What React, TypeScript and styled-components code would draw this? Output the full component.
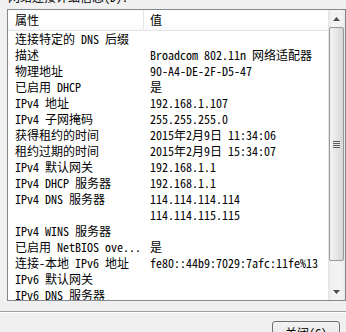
import styled, { createGlobalStyle } from 'styled-components';

const GlobalStyle = createGlobalStyle`
    html, body {
        margin: 0;
        padding: 0;
        background: #f0f0f0;
    }
    body {
        font-family: "Noto Sans Mono CJK SC", "Noto Sans CJK SC", "Liberation Mono", monospace;
        font-size: 12px;
        color: #000;
    }
`;

const rows: [string, string][] = [
    ['连接特定的 DNS 后缀', ''],
    ['描述', 'Broadcom 802.11n 网络适配器'],
    ['物理地址', '90-A4-DE-2F-D5-47'],
    ['已启用 DHCP', '是'],
    ['IPv4 地址', '192.168.1.107'],
    ['IPv4 子网掩码', '255.255.255.0'],
    ['获得租约的时间', '2015年2月9日 11:34:06'],
    ['租约过期的时间', '2015年2月9日 15:34:07'],
    ['IPv4 默认网关', '192.168.1.1'],
    ['IPv4 DHCP 服务器', '192.168.1.1'],
    ['IPv4 DNS 服务器', '114.114.114.114'],
    ['', '114.114.115.115'],
    ['IPv4 WINS 服务器', ''],
    ['已启用 NetBIOS ove...', '是'],
    ['连接-本地 IPv6 地址', 'fe80::44b9:7029:7afc:11fe%13'],
    ['IPv6 默认网关', ''],
    ['IPv6 DNS 服务器', ''],
];

export default function App() {
    return (
        <>
            <GlobalStyle />
            <Dialog>
                <Caption>网络连接详细信息(D):</Caption>
                <ListBox>
                    <ListContent>
                        <Header>
                            <HeaderCell>属性</HeaderCell>
                            <HeaderCell>值</HeaderCell>
                        </Header>
                        {rows.map(([k, v], i) => (
                            <Row key={i}>
                                <Cell>{k}</Cell>
                                <Cell>{v}</Cell>
                            </Row>
                        ))}
                    </ListContent>
                    <ScrollBar>
                        <Arrow>
                            <svg width="7" height="4" viewBox="0 0 7 4">
                                <path d="M0 4 L3.5 0 L7 4 Z" fill="#4d4d4d" />
                            </svg>
                        </Arrow>
                        <Track>
                            <Thumb>
                                <Grip />
                            </Thumb>
                        </Track>
                        <Arrow>
                            <svg width="7" height="4" viewBox="0 0 7 4">
                                <path d="M0 0 L7 0 L3.5 4 Z" fill="#4d4d4d" />
                            </svg>
                        </Arrow>
                    </ScrollBar>
                </ListBox>
                <Separator />
                <Footer>
                    <Button>关闭(C)</Button>
                </Footer>
            </Dialog>
        </>
    );
}

const Dialog = styled.div`
    width: 346px;
    height: 332px;
    overflow: hidden;
    display: flex;
    flex-direction: column;
`;

const Caption = styled.div`
    height: 12px;
    line-height: 12px;
    margin-top: -9px;
    padding-left: 8px;
    white-space: nowrap;
`;

const ListBox = styled.div`
    margin: 6px 0 0 7px;
    width: 337px;
    height: 290px;
    border: 1px solid #828790;
    background: #fff;
    display: flex;
    flex-shrink: 0;
`;

const ListContent = styled.div`
    flex: 1;
    overflow: hidden;
`;

const Header = styled.div`
    display: grid;
    grid-template-columns: 135px 1fr;
    height: 20px;
    border-bottom: 1px solid #e5e5e5;
    background: linear-gradient(#ffffff, #ffffff 60%, #f7f8fa);
`;

const HeaderCell = styled.div`
    padding-left: 7px;
    line-height: 20px;
    font-size: 12px;
    & + & {
        border-left: 1px solid #e3e4e6;
        padding-left: 6px;
    }
`;

const Row = styled.div`
    display: grid;
    grid-template-columns: 135px 1fr;
    height: 16px;
    line-height: 16px;
`;

const Cell = styled.div`
    padding-left: 7px;
    white-space: nowrap;
    overflow: hidden;
`;

const ScrollBar = styled.div`
    width: 17px;
    flex-shrink: 0;
    display: flex;
    flex-direction: column;
    background: linear-gradient(90deg, #e3e3e3, #f2f2f2 20%, #f2f2f2 80%, #e8e8e8);
`;

const Arrow = styled.div`
    height: 17px;
    display: flex;
    align-items: center;
    justify-content: center;
`;

const Track = styled.div`
    flex: 1;
    padding: 0 1px 22px 1px;
    display: flex;
`;

const Thumb = styled.div`
    flex: 1;
    border: 1px solid #979797;
    border-radius: 2px;
    background: linear-gradient(90deg, #f3f3f3, #e6e6e6 50%, #d6d6d6);
    display: flex;
    align-items: center;
    justify-content: center;
`;

const Grip = styled.div`
    width: 7px;
    height: 7px;
    background: repeating-linear-gradient(#5a5a5a 0 1px, #e8e8e8 1px 2px);
`;

const Separator = styled.div`
    margin: 10px 0 0 0;
    height: 0;
    border-top: 1px solid #a0a0a0;
    border-bottom: 1px solid #ffffff;
    flex-shrink: 0;
`;

const Footer = styled.div`
    display: flex;
    justify-content: flex-end;
    padding: 8px 6px 0 0;
`;

const Button = styled.button`
    width: 68px;
    height: 23px;
    border: 1px solid #707070;
    border-radius: 3px;
    background: linear-gradient(#f2f2f2, #ebebeb 50%, #dddddd 50%, #cfcfcf);
    font-family: inherit;
    font-size: 12px;
    color: #000;
    padding: 0;
    line-height: 20px;
`;
